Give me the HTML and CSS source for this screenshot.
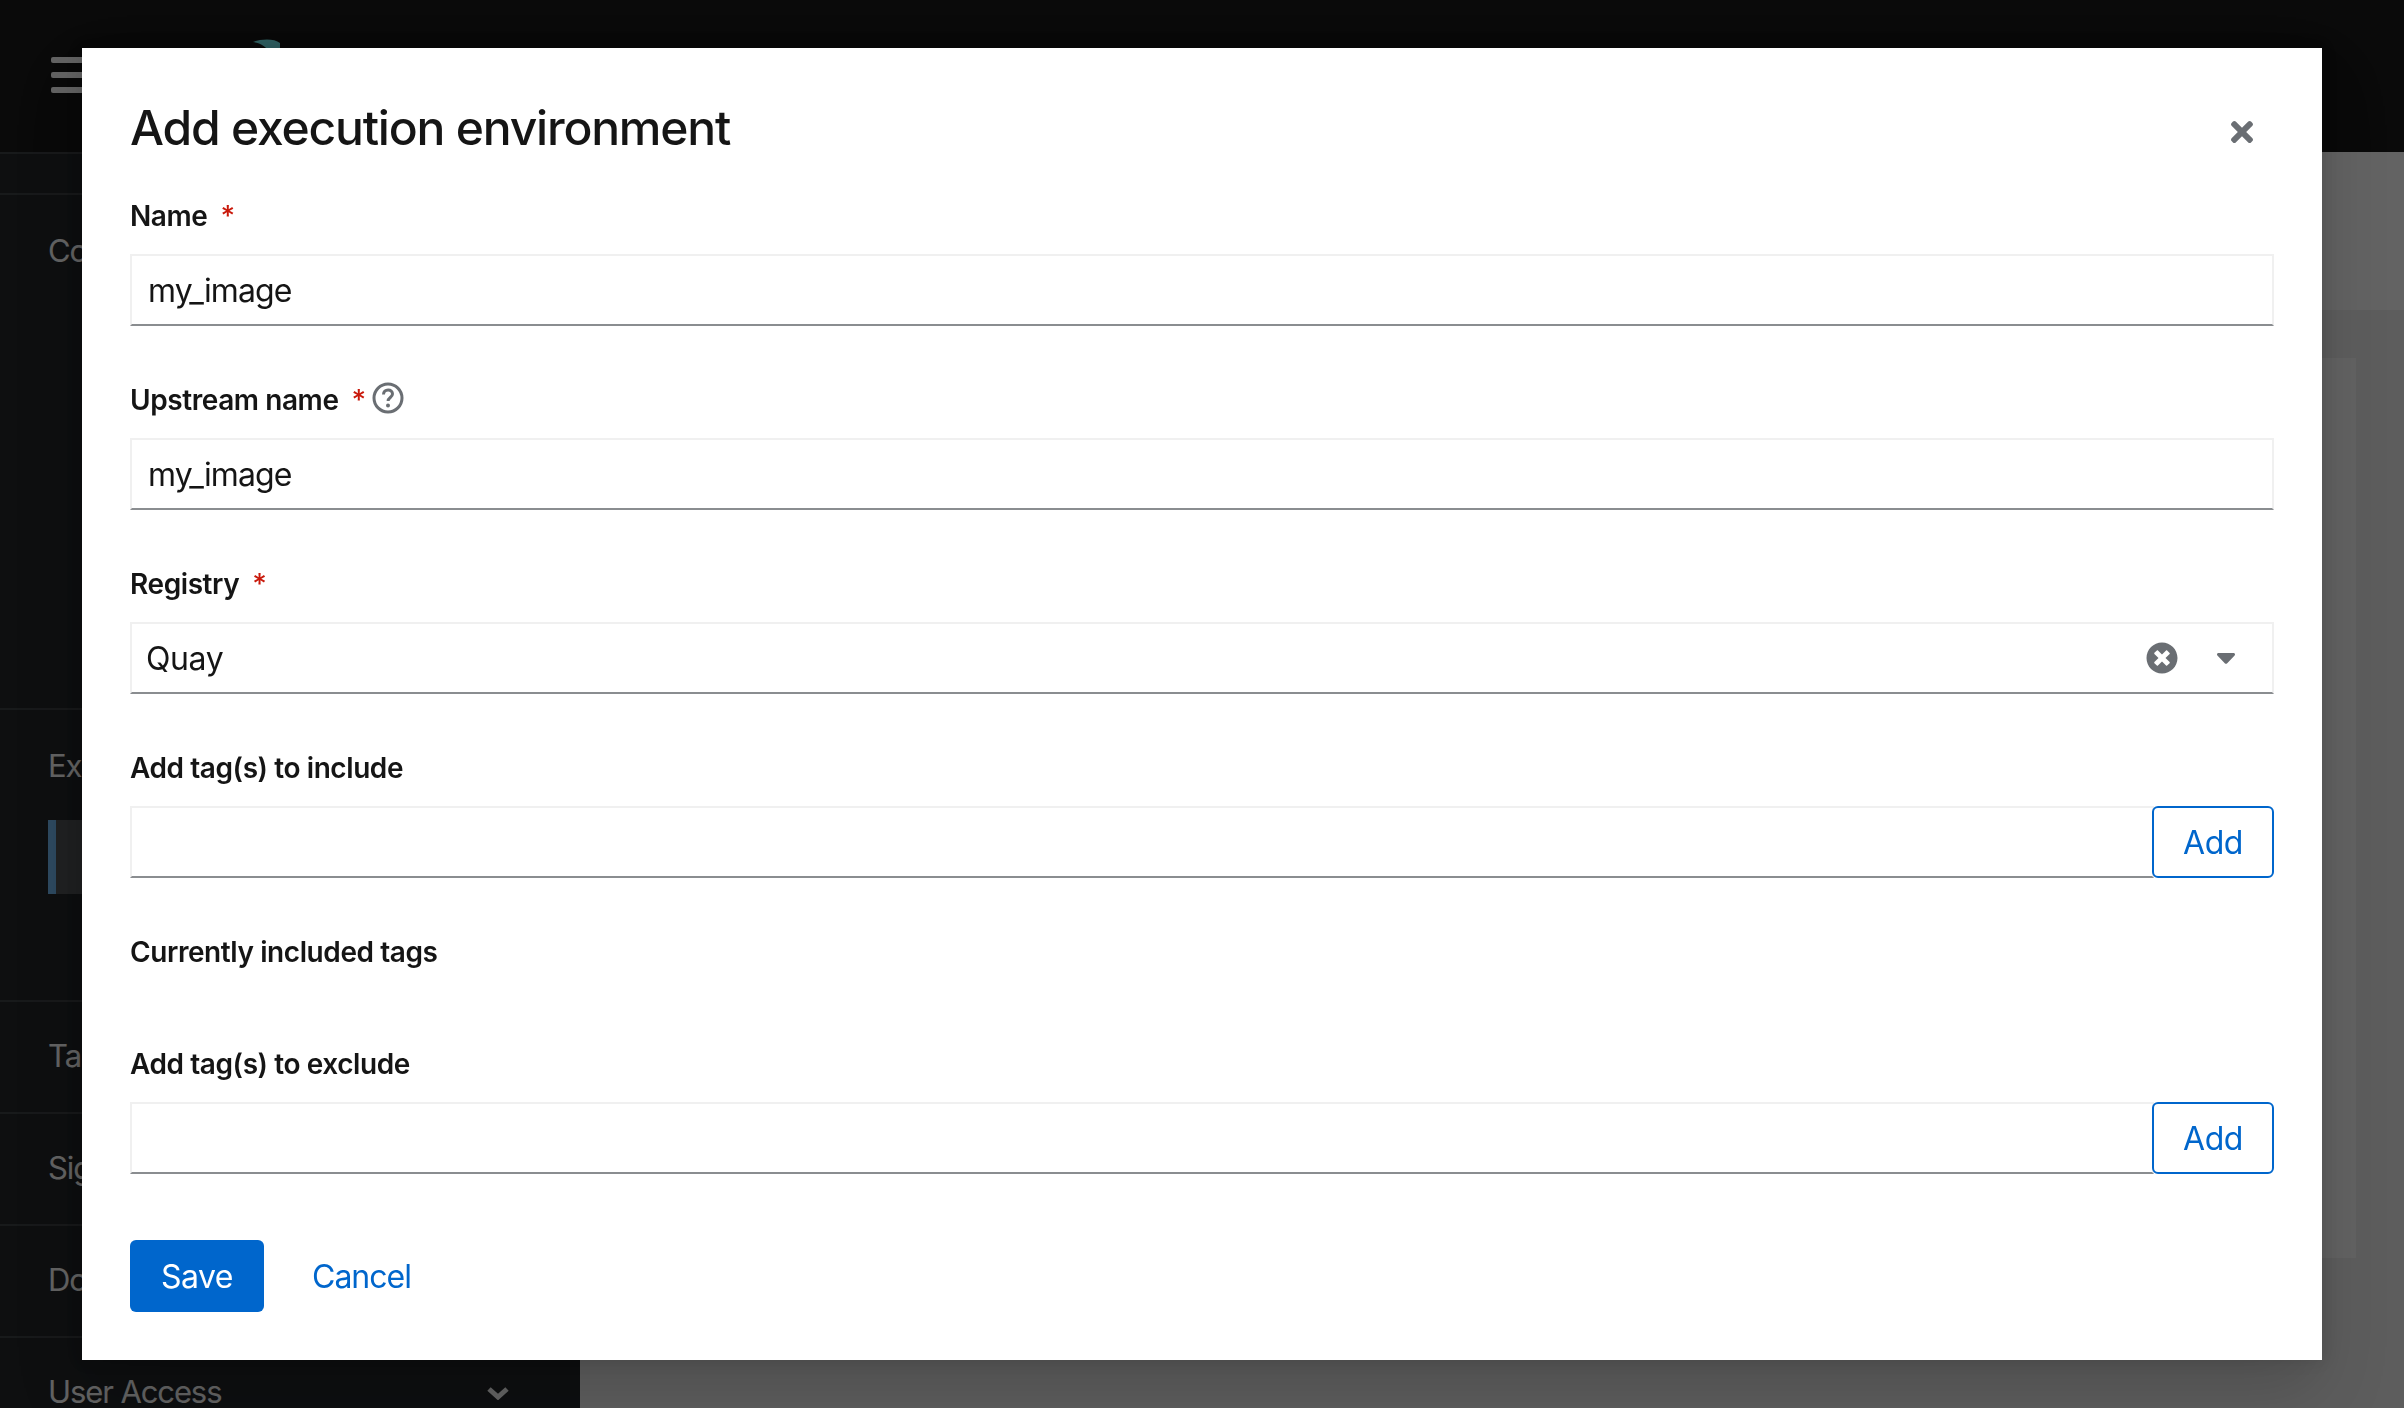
FILE: index.html
```html
<!DOCTYPE html>
<html lang="en">
<head>
  <meta charset="UTF-8">
  <meta name="viewport" content="width=device-width, initial-scale=1.0">
  <title>Add execution environment</title>
  <link rel="stylesheet" href="styles.css">
</head>
<body>
  <!-- Page behind the modal -->
  <header class="topbar">
    <div class="hamburger">
      <span></span>
      <span></span>
      <span></span>
    </div>
    <svg class="logo" viewBox="0 0 40 20">
      <path d="M3 5C10 2 24 1 30 6V20H21C18 9 10 6 3 5Z"/>
    </svg>
  </header>

  <div class="layout">
    <nav class="sidebar">
      <div class="nav-spacer"></div>
      <div class="nav-group nav-collections">
        <div class="nav-title">Co</div>
      </div>
      <div class="nav-group nav-execution">
        <div class="nav-title">Ex</div>
        <div class="nav-active"></div>
      </div>
      <div class="nav-group nav-item">
        <div class="nav-title">Ta</div>
      </div>
      <div class="nav-group nav-item">
        <div class="nav-title">Sig</div>
      </div>
      <div class="nav-group nav-item">
        <div class="nav-title">Do</div>
      </div>
      <div class="nav-group nav-item nav-expand">
        <div class="nav-title">User Access</div>
        <svg class="nav-chevron" viewBox="0 0 24 14">
          <path d="M3 3l9 8 9-8"/>
        </svg>
      </div>
    </nav>

    <main class="main">
      <div class="page-header"></div>
      <div class="page-body">
        <div class="page-card"></div>
      </div>
    </main>
  </div>

  <!-- Modal -->
  <div class="backdrop">
    <div class="modal">
      <div class="modal-header">
        <h1>Add execution environment</h1>
        <svg class="close-icon" viewBox="0 80 352 352">
          <path d="M242.72 256l100.07-100.07c12.28-12.28 12.28-32.19 0-44.48l-22.24-22.24c-12.28-12.28-32.19-12.28-44.48 0L176 189.28 75.93 89.21c-12.28-12.28-32.19-12.28-44.48 0L9.21 111.45c-12.28 12.28-12.28 32.19 0 44.48L109.28 256 9.21 356.07c-12.28 12.28-12.28 32.19 0 44.48l22.24 22.24c12.28 12.28 32.2 12.28 44.48 0L176 322.72l100.07 100.07c12.28 12.28 32.2 12.28 44.48 0l22.24-22.24c12.28-12.28 12.28-32.19 0-44.48L242.72 256z"/>
        </svg>
      </div>

      <div class="form-group">
        <div class="form-label">Name <span class="required">*</span></div>
        <input class="text-input" type="text" value="my_image">
      </div>

      <div class="form-group">
        <div class="form-label">
          Upstream name <span class="required">*</span>
          <svg class="help-icon" viewBox="0 0 32 32">
            <circle cx="16" cy="16" r="14"/>
            <path d="M11.5 12.5c0-2.800 2-4.500 4.600-4.500s4.400 1.600 4.400 4c0 3.400-4.400 3.600-4.400 7"/>
            <circle class="help-dot" cx="16" cy="23.500" r="2"/>
          </svg>
        </div>
        <input class="text-input" type="text" value="my_image">
      </div>

      <div class="form-group">
        <div class="form-label">Registry <span class="required">*</span></div>
        <div class="select-box">
          <span class="select-value">Quay</span>
          <svg class="clear-icon" viewBox="0 0 512 512">
            <path d="M256 8C119 8 8 119 8 256s111 248 248 248 248-111 248-248S393 8 256 8zm121.6 313.1c4.7 4.7 4.7 12.3 0 17L338 377.6c-4.7 4.7-12.3 4.7-17 0L256 312l-65.1 65.6c-4.7 4.7-12.3 4.7-17 0L134.4 338c-4.7-4.7-4.7-12.3 0-17l65.6-65-65.6-65.1c-4.7-4.7-4.7-12.3 0-17l39.6-39.6c4.7-4.7 12.3-4.7 17 0l65 65.7 65.1-65.6c4.7-4.7 12.3-4.7 17 0l39.6 39.6c4.7 4.7 4.7 12.3 0 17L312 256l65.6 65.1z"/>
          </svg>
          <svg class="caret-icon" viewBox="0 0 18 11">
            <path d="M1.500 0h15c1.300 0 2 1.500 1.100 2.400L10 10.400c-.6.600-1.400.600-2 0L.4 2.400C-.5 1.500.2 0 1.500 0z"/>
          </svg>
        </div>
      </div>

      <div class="form-group">
        <div class="form-label">Add tag(s) to include</div>
        <div class="input-group">
          <input class="text-input" type="text">
          <button class="btn-add">Add</button>
        </div>
      </div>

      <div class="form-group">
        <div class="form-label">Currently included tags</div>
      </div>

      <div class="form-group form-group-last">
        <div class="form-label">Add tag(s) to exclude</div>
        <div class="input-group">
          <input class="text-input" type="text">
          <button class="btn-add">Add</button>
        </div>
      </div>

      <div class="modal-actions">
        <button class="btn-save">Save</button>
        <button class="btn-cancel">Cancel</button>
      </div>
    </div>
  </div>
</body>
</html>
```

FILE: styles.css
```css
* {
  box-sizing: border-box;
}

html, body {
  height: 100%;
}

body {
  margin: 0;
  height: 1408px;
  overflow: hidden;
  font-family: Inter, "Open Sans", sans-serif;
  background-color: #f0f0f0;
}

/* Page behind the modal */
.topbar {
  display: flex;
  height: 152px;
  padding: 57px 0 0 51px;
  background-color: #151515;
}

.hamburger {
  display: flex;
  flex-direction: column;
  gap: 9px;
  width: 42px;
}

.hamburger span {
  height: 6px;
  border-radius: 2px;
  background-color: #fff;
}

.logo {
  width: 40px;
  height: 20px;
  margin: -20px 0 0 157px;
  fill: #73ecf0;
}

.layout {
  display: flex;
  height: 1256px;
}

.sidebar {
  width: 580px;
  flex-shrink: 0;
  overflow: hidden;
  background-color: #212427;
  color: #fff;
  font-size: 31px;
  letter-spacing: -1.1px;
}

.nav-spacer {
  height: 41px;
  border-top: 2px solid #3c3f42;
}

.nav-group {
  border-top: 2px solid #3c3f42;
  padding: 36px 48px 0;
  white-space: nowrap;
}

.nav-title {
  line-height: 40px;
}

.nav-collections {
  height: 515px;
}

.nav-execution {
  height: 292px;
}

.nav-item {
  height: 112px;
  padding-top: 34px;
}

.nav-active {
  height: 74px;
  margin-top: 34px;
  border-left: 8px solid #73bcf7;
  background-color: #4f5255;
}

.nav-expand {
  display: flex;
  justify-content: space-between;
}

.nav-chevron {
  width: 24px;
  height: 14px;
  margin: 14px 22px 0 0;
  fill: none;
  stroke: #fff;
  stroke-width: 5;
}

.main {
  flex: 1;
}

.page-header {
  height: 158px;
  background-color: #fff;
}

.page-body {
  padding: 48px;
}

.page-card {
  height: 900px;
  background-color: #fff;
}

/* Modal */
.backdrop {
  position: fixed;
  top: 0;
  left: 0;
  width: 100%;
  height: 100%;
  display: flex;
  align-items: center;
  justify-content: center;
  background-color: rgba(3, 3, 3, 0.62);
}

.modal {
  width: 2240px;
  padding: 48px;
  background-color: #fff;
  color: #151515;
  box-shadow: 0 32px 64px rgba(3, 3, 3, 0.16), 0 0 16px rgba(3, 3, 3, 0.1);
}

.modal-header {
  display: flex;
  justify-content: space-between;
  height: 94px;
}

.modal-header h1 {
  margin: 0;
  padding-top: 2px;
  font-size: 48px;
  font-weight: 500;
  line-height: 60px;
  letter-spacing: -1.2px;
  color: #151515;
}

.close-icon {
  width: 22px;
  height: 22px;
  margin: 25px 21px 0 0;
  fill: #6a6e73;
}

.form-group {
  display: flow-root;
  margin-bottom: 48px;
}

.form-group-last {
  margin-bottom: 66px;
}

.form-label {
  display: flex;
  align-items: center;
  gap: 13px;
  height: 48px;
  margin-bottom: 16px;
  padding-top: 3px;
  font-size: 28px;
  font-weight: 600;
  letter-spacing: -0.42px;
}

.required {
  color: #c9190b;
  font-weight: 500;
}

.help-icon {
  width: 32px;
  height: 32px;
  margin: -4px 0 0 -7px;
  fill: none;
  stroke: #6a6e73;
  stroke-width: 3;
}

.help-dot {
  fill: #6a6e73;
  stroke: none;
}

.text-input {
  display: block;
  width: 100%;
  height: 72px;
  padding: 0 16px;
  border: 2px solid #f0f0f0;
  border-bottom-color: #8a8d90;
  border-radius: 0;
  outline: none;
  font-family: inherit;
  font-size: 32px;
  color: #151515;
  letter-spacing: -0.9px;
}

.select-box {
  display: flex;
  align-items: center;
  height: 72px;
  padding: 0 37px 0 14px;
  border: 2px solid #f0f0f0;
  border-bottom-color: #8a8d90;
  font-size: 32px;
}

.select-value {
  flex: 1;
  letter-spacing: -0.4px;
}

.clear-icon {
  width: 32px;
  height: 32px;
  margin-right: 39px;
  fill: #6a6e73;
}

.caret-icon {
  width: 18px;
  height: 11px;
  fill: #6a6e73;
}

.input-group {
  display: flex;
}

.input-group .text-input {
  flex: 1;
}

button {
  font-family: inherit;
  font-size: 32px;
  letter-spacing: -0.5px;
  cursor: pointer;
}

.btn-add {
  width: 122px;
  height: 72px;
  margin-left: -2px;
  padding: 0;
  border: 2px solid #06c;
  border-radius: 6px;
  background-color: #fff;
  color: #06c;
}

.modal-actions {
  display: flex;
  gap: 16px;
}

.btn-save {
  width: 134px;
  height: 72px;
  border: 0;
  border-radius: 6px;
  background-color: #06c;
  color: #fff;
}

.btn-cancel {
  height: 72px;
  padding: 0 32px;
  border: 0;
  background: none;
  color: #06c;
  letter-spacing: -1px;
}
```
